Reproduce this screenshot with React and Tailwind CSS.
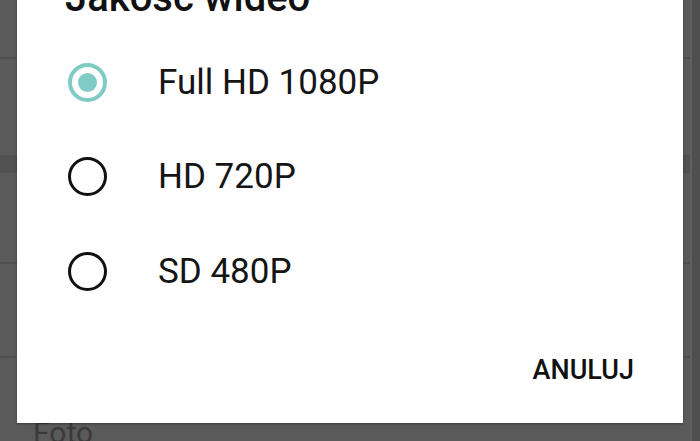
import React, { useState } from 'react'

const opcje = ['Full HD 1080P', 'HD 720P', 'SD 480P']

function Radio({ zaznaczony }) {
  if (zaznaczony) {
    return (
      <span className="w-[39px] h-[39px] rounded-full border-[4px] border-[#80cbc4] flex items-center justify-center shrink-0">
        <span className="w-[19px] h-[19px] rounded-full bg-[#80cbc4]" />
      </span>
    )
  }
  return <span className="w-[39px] h-[39px] rounded-full border-[3.5px] border-[#111] shrink-0" />
}

export default function App() {
  const [wybrana, setWybrana] = useState(0)

  return (
    <div className="relative w-[700px] h-[441px] overflow-hidden bg-[#5a5a5a] font-['Roboto','Liberation_Sans',sans-serif]">
      {/* Przyciemniona lista w tle */}
      <div className="flex h-full">
        <div className="flex-1 flex flex-col">
          <div className="h-[57px] shrink-0" />
          <div className="h-[2px] bg-[#4f4f4f] shrink-0" />
          <div className="h-[96px] shrink-0" />
          <div className="h-[18px] bg-[#515151] shrink-0" />
          <div className="h-[89px] shrink-0" />
          <div className="h-[2px] bg-[#4f4f4f] shrink-0" />
          <div className="h-[92px] shrink-0" />
          <div className="h-[2px] bg-[#4f4f4f] shrink-0" />
          <div className="pl-[33px] pt-[60px] text-[30px] leading-none text-[#3a3a3a]">Foto</div>
        </div>
        <div className="w-[2px] bg-[#606060]" />
        <div className="w-[8px] bg-[#4f4f4f]" />
      </div>

      {/* Okno dialogowe */}
      <div className="absolute left-[17px] right-[17px] top-[-46px] bottom-[18px] bg-white shadow-[0_1px_2px_rgba(0,0,0,0.35)] flex flex-col">
        <div className="pt-[24px] pl-[48px] text-[40px] leading-[40px] font-medium text-[#111]">Jakość wideo</div>
        <div className="h-[17px]" />
        {opcje.map((o, i) => (
          <div
            key={o}
            onClick={() => setWybrana(i)}
            className="h-[94.5px] flex items-center pl-[51px] cursor-pointer"
          >
            <Radio zaznaczony={wybrana === i} />
            <span className="ml-[51px] text-[35px] leading-[35px] text-[#151515]">{o}</span>
          </div>
        ))}
        <div className="flex-1 flex items-center justify-end pr-[49px]">
          <button className="text-[27px] leading-none font-medium text-[#111]">ANULUJ</button>
        </div>
      </div>
    </div>
  )
}
